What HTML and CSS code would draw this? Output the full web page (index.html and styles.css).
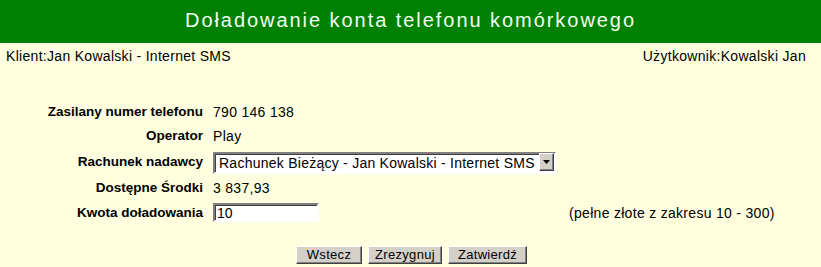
FILE: index.html
```html
<!DOCTYPE html>
<html lang="pl">
<head>
<meta charset="utf-8">
<title>Doładowanie konta telefonu komórkowego</title>
<link rel="stylesheet" href="styles.css">
</head>
<body>
<div class="header">Doładowanie konta telefonu komórkowego</div>
<div class="info">
  <span>Klient:Jan Kowalski - Internet SMS</span>
  <span>Użytkownik:Kowalski Jan</span>
</div>
<form class="form">
  <div class="label">Zasilany numer telefonu</div>
  <div class="value">790 146 138</div>
  <div class="extra"></div>

  <div class="label">Operator</div>
  <div class="value">Play</div>
  <div class="extra"></div>

  <div class="label">Rachunek nadawcy</div>
  <div class="value">
    <span class="select-wrap">
      <select class="select"><option>Rachunek Bieżący - Jan Kowalski - Internet SMS</option></select>
      <span class="arrow"><svg width="7" height="4" viewBox="0 0 7 4"><polygon points="0,0 7,0 3.5,4" fill="#000"/></svg></span>
    </span>
  </div>
  <div class="extra"></div>

  <div class="label">Dostępne Środki</div>
  <div class="value">3 837,93</div>
  <div class="extra"></div>

  <div class="label">Kwota doładowania</div>
  <div class="value"><input class="input" type="text" value="10"></div>
  <div class="extra hint">(pełne złote z zakresu 10 - 300)</div>
</form>
<div class="buttons">
  <button class="btn btn-back" type="button">Wstecz</button>
  <button class="btn btn-cancel" type="button">Zrezygnuj</button>
  <button class="btn btn-ok" type="button">Zatwierdź</button>
</div>
</body>
</html>
```
FILE: styles.css
```css
html, body {
  margin: 0;
  padding: 0;
}
body {
  background: #ffffe0;
  font-family: "Liberation Sans", Arial, sans-serif;
  font-size: 14px;
  letter-spacing: 0.3px;
  color: #000;
}
.header {
  height: 43px;
  background: #008000;
  color: #f0fff0;
  font-size: 20px;
  letter-spacing: 1.95px;
  display: flex;
  align-items: center;
  justify-content: center;
  padding-bottom: 2px;
  box-sizing: border-box;
}
.info {
  display: flex;
  justify-content: space-between;
  padding: 5px 15px 0 6px;
  line-height: 16px;
}
.form {
  margin: 36px 0 0 0;
  display: grid;
  grid-template-columns: 203px 343px auto;
  grid-template-rows: 24px 24px 28px 24px 25px;
  column-gap: 10px;
  align-items: center;
}
.label {
  text-align: right;
  font-weight: bold;
  font-size: 13.5px;
  letter-spacing: 0;
  line-height: 24px;
}
.value {
  line-height: 24px;
  display: flex;
  align-items: center;
}
.select-wrap {
  position: relative;
  display: block;
  width: 343px;
  height: 22px;
}
.select {
  appearance: none;
  -webkit-appearance: none;
  width: 343px;
  height: 22px;
  margin: 0;
  box-sizing: border-box;
  border: 2px solid;
  border-color: #808080 #ffffff #ffffff #808080;
  box-shadow: inset 1px 1px 0 #404040;
  background: #fff;
  font-family: "Liberation Sans", Arial, sans-serif;
  font-size: 14px;
  letter-spacing: 0.25px;
  padding: 0 0 0 4px;
  color: #000;
  border-radius: 0;
}
.arrow {
  position: absolute;
  right: 2px;
  top: 2px;
  width: 15px;
  height: 18px;
  box-sizing: border-box;
  background: #d4d0c8;
  border: 1px solid;
  border-color: #ffffff #404040 #404040 #ffffff;
  box-shadow: inset -1px -1px 0 #808080;
  display: flex;
  align-items: center;
  justify-content: center;
  padding-right: 1px;
}
.input {
  width: 106px;
  height: 19px;
  margin: 0;
  box-sizing: border-box;
  border: 2px solid;
  border-color: #808080 #ffffff #ffffff #808080;
  box-shadow: inset 1px 1px 0 #404040;
  background: #fff;
  font-family: "Liberation Sans", Arial, sans-serif;
  font-size: 14px;
  padding: 0 0 0 2px;
  color: #000;
  border-radius: 0;
}
.hint {
  line-height: 24px;
  padding-left: 3px;
}
.buttons {
  margin-top: 21px;
  display: flex;
  justify-content: center;
  gap: 6px;
  padding-left: 2px;
}
.btn {
  height: 18px;
  margin: 0;
  padding: 0;
  box-sizing: border-box;
  background: #d4d0c8;
  border: 1px solid;
  border-color: #ffffff #404040 #404040 #ffffff;
  box-shadow: inset -1px -1px 0 #808080;
  font-family: "Liberation Sans", Arial, sans-serif;
  font-size: 13px;
  letter-spacing: 0.3px;
  color: #000;
  border-radius: 0;
  line-height: 14px;
}
.btn-back { width: 66px; }
.btn-cancel { width: 74px; }
.btn-ok { width: 79px; }
```
